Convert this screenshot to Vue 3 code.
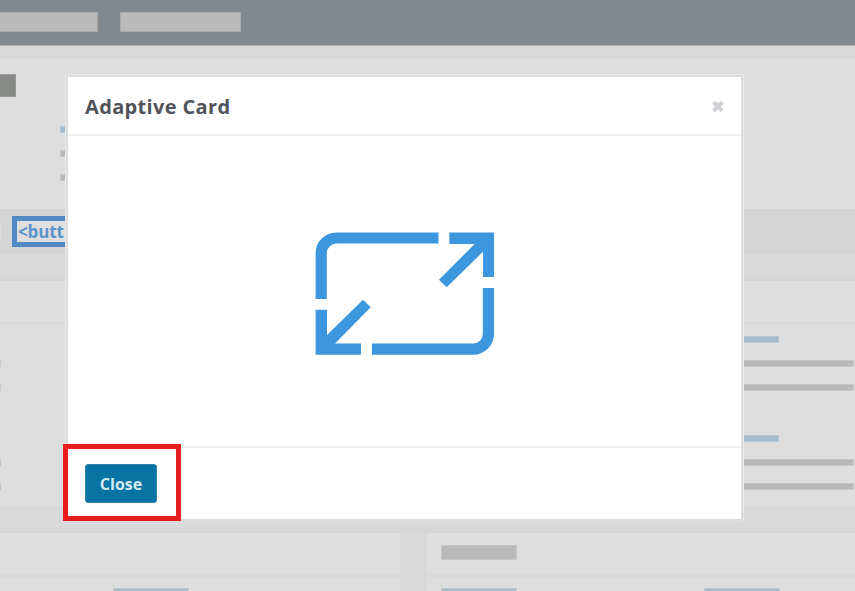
<script setup>
    import { ref } from 'vue';
    const isOpen = ref(true);
    const bullets = ['link', 'text', 'text'];
    const groups = [1, 2];

    function closeModal() {
        isOpen.value = false;
    }
</script>

<template>
    <div class="page">
        <header class="topbar">
            <span class="tab tab_first"></span>
            <span class="tab"></span>
        </header>
        <section class="intro">
            <div class="logo"></div>
            <div class="bullets">
                <span v-for="(type, i) in bullets" :key="i" class="line" :class="type"></span>
            </div>
        </section>
        <div class="toolbar">
            <span class="chip_end"></span>
            <span class="chip">&lt;butt</span>
        </div>
        <section class="panel">
            <div class="panel_header"></div>
            <div class="panel_body">
                <div v-for="group in groups" :key="group" class="group">
                    <div class="column column_left">
                        <span class="line blank"></span>
                        <span class="line edge"></span>
                        <span class="line edge"></span>
                    </div>
                    <div class="column">
                        <span class="line link"></span>
                        <span class="line text"></span>
                        <span class="line text"></span>
                    </div>
                </div>
            </div>
        </section>
        <div class="cards">
            <div class="card card_left">
                <div class="card_header"></div>
                <div class="card_body"><span class="card_link"></span></div>
            </div>
            <div class="card card_right">
                <div class="card_header"><span class="card_title"></span></div>
                <div class="card_body">
                    <span class="card_link"></span>
                    <span class="card_link"></span>
                </div>
            </div>
        </div>

        <div v-if="isOpen" class="modal">
            <div class="modal_header">
                <h2>Adaptive Card</h2>
                <button type="button" class="modal_x" aria-label="Close" @click="closeModal()">
                    <svg width="14" height="13" viewBox="0 0 14 13">
                        <path d="M2.7 2.3 L11.3 10.7 M11.3 2.3 L2.7 10.7" />
                    </svg>
                </button>
            </div>
            <div class="modal_body">
                <svg class="resize_icon" width="180" height="124" viewBox="0 0 180 124">
                    <path class="frame" d="M123.5 6 H21.5 A15.3 15.3 0 0 0 6.2 21.5 V67" />
                    <path class="frame" d="M57 117.2 H158 A15.3 15.3 0 0 0 173.4 102 V56" />
                    <path d="M134.3 .4 H179 V45 H168 V19.7 L131.7 55.3 L124 47.7 L159.7 12 H134.3 Z" />
                    <path d="M.6 77.7 H12 V103 L48 67.7 L55.7 75.3 L20 111.5 H46 V122.7 H.6 Z" />
                </svg>
            </div>
            <div class="modal_footer">
                <button type="button" class="close_button" @click="closeModal()">Close</button>
            </div>
            <div class="highlight"></div>
        </div>
    </div>
</template>

<style>
    body {
        margin: 0;
        overflow: hidden;
    }
</style>

<style scoped>
    * {
        box-sizing: border-box;
    }

    .page {
        position: relative;
        display: flex;
        flex-direction: column;
        width: 855px;
        height: 591px;
        overflow: hidden;
        background-color: #d9d9d9;
        font-family: "Open Sans", "Noto Sans", sans-serif;
    }

    .topbar {
        display: flex;
        gap: 22px;
        height: 46px;
        padding-top: 12px;
        background-color: #818890;
        border-bottom: 1px solid #b3b7ba;
        flex-shrink: 0;
    }

    .tab {
        width: 121px;
        height: 20px;
        background-color: #b9b9b9;
        border: 1px solid #a9abad;
    }

    .tab_first {
        width: 98px;
        border-left: none;
    }

    .intro {
        display: flex;
        height: 150px;
        margin-top: 13px;
        background-color: #dedede;
        flex-shrink: 0;
    }

    .logo {
        width: 16px;
        height: 23px;
        margin-top: 15px;
        background-color: #888a88;
        border: 1px solid #999b99;
        border-left: none;
    }

    .bullets {
        display: flex;
        flex-direction: column;
        gap: 17px;
        width: 30px;
        margin: 67px 0 0 44px;
    }

    .line {
        height: 7px;
        border: 1px solid #c6c6c6;
        flex-shrink: 0;
    }

    .text {
        background-color: #b8b8b8;
    }

    .link {
        background-color: #a5bccd;
        border-color: #b9c8d2;
    }

    .blank {
        border-color: transparent;
    }

    .edge {
        border: none;
        background-color: #c6c6c6;
    }

    .toolbar {
        display: flex;
        align-items: center;
        gap: 11px;
        height: 45px;
        background-color: #d5d5d5;
        flex-shrink: 0;
    }

    .chip_end {
        width: 1px;
        height: 22px;
        background-color: #dedede;
    }

    .chip {
        width: 130px;
        height: 31px;
        padding-left: 1px;
        border: 5px solid #5189c2;
        background-color: #dedede;
        color: #5b93ca;
        font-size: 17px;
        font-weight: 700;
        line-height: 22px;
        letter-spacing: -0.15px;
    }

    .panel {
        height: 229px;
        margin-top: 23px;
        border-top: 4px solid #d5d5d5;
        background-color: #dedede;
        flex-shrink: 0;
    }

    .panel_header {
        height: 44px;
        border-bottom: 3px solid #d9d9d9;
    }

    .panel_body {
        display: flex;
        flex-direction: column;
        gap: 44px;
        padding-top: 11px;
    }

    .group {
        display: flex;
        justify-content: space-between;
        padding-right: 1px;
    }

    .column {
        display: flex;
        flex-direction: column;
        gap: 17px;
        width: 150px;
    }

    .column_left {
        width: 1px;
    }

    .column .link {
        width: 75px;
    }

    .cards {
        display: flex;
        gap: 27px;
        margin-top: 22px;
        height: 64px;
        border-top: 5px solid #d5d5d5;
    }

    .card {
        background-color: #dedede;
    }

    .card_left {
        width: 400px;
    }

    .card_right {
        width: 428px;
    }

    .card_header {
        height: 44px;
        padding: 12px 0 0 14px;
        border-bottom: 3px solid #d9d9d9;
    }

    .card_title {
        display: block;
        width: 76px;
        height: 15px;
        background-color: #b9b9b9;
        border: 1px solid #c6c6c6;
    }

    .card_body {
        display: flex;
        gap: 187px;
        padding: 11px 0 0 14px;
    }

    .card_left .card_body {
        padding-left: 113px;
    }

    .card_link {
        width: 76px;
        height: 7px;
        background-color: #a5bccd;
        border: 1px solid #b9c8d2;
    }

    .modal {
        position: absolute;
        left: 65px;
        top: 74px;
        display: flex;
        flex-direction: column;
        width: 679px;
        height: 448px;
        border: 1px solid #e8e8e8;
        border-bottom-color: #dcdcdc;
        background-color: #fff;
        box-shadow: inset 0 0 0 2px #dcdcdc;
        padding: 2px;
    }

    .modal_header {
        display: flex;
        align-items: center;
        justify-content: space-between;
        height: 59px;
        padding: 2px 16px 0 17px;
        border-bottom: 2px solid #f0f0f0;
    }

    .modal_header h2 {
        margin: 0;
        color: #50535a;
        font-size: 20px;
        font-weight: 700;
        line-height: 28px;
        letter-spacing: 0.35px;
    }

    .modal_x {
        display: flex;
        padding: 0;
        border: none;
        background: none;
        cursor: pointer;
    }

    .modal_x path {
        stroke: #cfd0d4;
        stroke-width: 4;
    }

    .modal_body {
        display: flex;
        padding: 96px 0 0 247px;
        height: 310px;
    }

    .resize_icon {
        fill: #3d97df;
    }

    .resize_icon .frame {
        fill: none;
        stroke: #3d97df;
        stroke-width: 11.2;
    }

    .modal_footer {
        flex: 1;
        padding: 16px 17px;
        border-top: 2px solid #f0f0f0;
    }

    .close_button {
        width: 72px;
        height: 39px;
        padding: 0;
        border: 1px solid #2d84ac;
        border-radius: 3px;
        background-color: #0874a4;
        color: #d5e9f2;
        font-family: inherit;
        font-size: 16px;
        font-weight: 700;
        cursor: pointer;
    }

    /* callout around the close button */
    .highlight {
        position: absolute;
        left: -3px;
        top: 369px;
        width: 118px;
        height: 77px;
        border: 5px solid #e91c1e;
        pointer-events: none;
    }
</style>
